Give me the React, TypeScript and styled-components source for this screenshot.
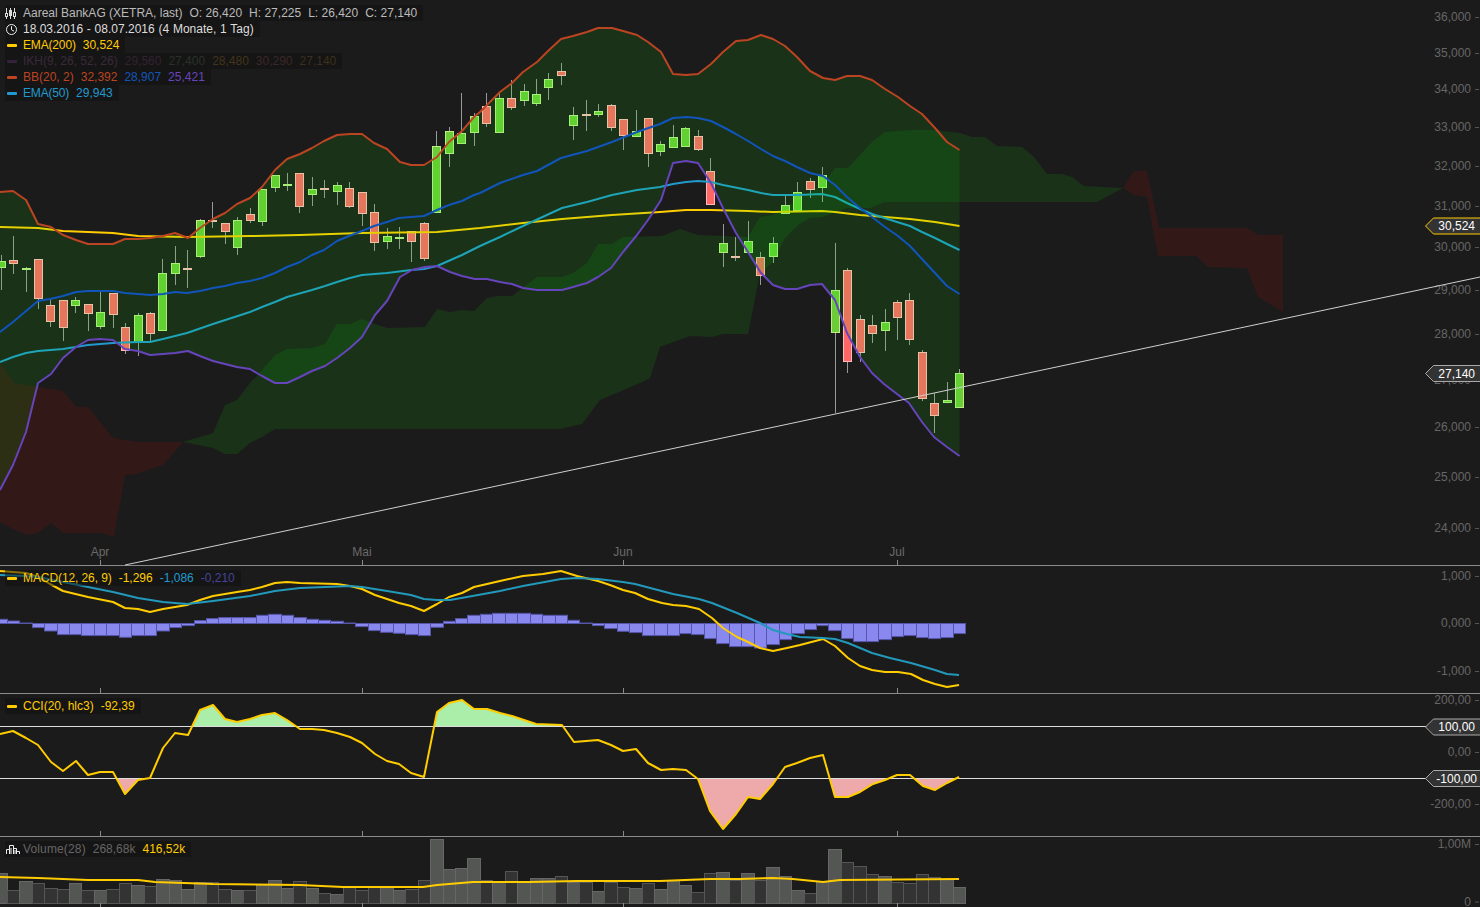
import React from "react";
import styled, { createGlobalStyle } from "styled-components";

const BG = "#1c1b1b";
const FONT = `"Liberation Sans", Arial, sans-serif`;
const STEP = 12.45;
const xAt = (i: number) => 1 + STEP * i;

const GlobalStyle = createGlobalStyle`
  html, body { margin: 0; padding: 0; background: ${BG}; }
  body { font-family: ${FONT}; font-size: 12px; overflow: hidden; }
`;

const Page = styled.main`
  display: flex;
  flex-direction: column;
  width: 1480px;
  height: 907px;
  background: ${BG};
  overflow: hidden;
`;
const Pane = styled.section<{ $height: number; $line?: boolean }>`
  position: relative;
  flex: none;
  box-sizing: border-box;
  height: ${(p) => p.$height}px;
  border-bottom: ${(p) => (p.$line ? "1px solid #8a8a8a" : "none")};
`;
const ChartSvg = styled.svg`
  display: block;
  width: 1480px;
  position: absolute;
  left: 0;
  top: 0;
`;
const Legend = styled.div<{ $top: number }>`
  position: absolute;
  left: 5px;
  top: ${(p) => p.$top}px;
  display: flex;
  flex-direction: column;
  align-items: flex-start;
`;
const LegendRow = styled.div`
  display: flex;
  align-items: center;
  height: 16px;
  padding-right: 6px;
  background: rgba(16, 16, 16, 0.5);
  white-space: nowrap;
  line-height: 16px;
`;
const IconSlot = styled.span`
  display: flex;
  align-items: center;
  width: 18px;
  height: 16px;
  flex: none;
`;
const Dash = styled.span<{ $color: string }>`
  display: block;
  width: 10px;
  height: 3px;
  margin-left: 2px;
  border-radius: 1px;
  background: ${(p) => p.$color};
`;
const LegendText = styled.span<{ $color: string; $gap?: boolean; $track?: number; $words?: number }>`
  color: ${(p) => p.$color};
  margin-left: ${(p) => (p.$gap ? "7px" : "0")};
  letter-spacing: ${(p) => p.$track ?? 0}px;
  word-spacing: ${(p) => p.$words ?? 0}px;
`;
const Wick = styled.line`
  stroke: #999;
  stroke-width: 1;
`;
const Body = styled.rect<{ $up: boolean }>`
  fill: ${(p) => (p.$up ? "#6ccc38" : "#ff6666")};
  stroke: ${(p) => (p.$up ? "#bbee88" : "#ffbbbb")};
  stroke-width: 1;
`;
const Curve = styled.polyline<{ $color: string; $w?: number }>`
  fill: none;
  stroke: ${(p) => p.$color};
  stroke-width: ${(p) => p.$w ?? 2};
  stroke-linejoin: round;
`;
const Area = styled.polygon<{ $color: string }>`
  fill: ${(p) => p.$color};
  stroke: none;
`;
const Rule = styled.line<{ $color?: string }>`
  stroke: ${(p) => p.$color ?? "#dddddd"};
  stroke-width: 1;
`;
const AxisText = styled.text`
  font-family: ${FONT};
  font-size: 12px;
  fill: #666;
  text-anchor: end;
`;
const MonthText = styled.text`
  font-family: ${FONT};
  font-size: 12px;
  fill: #6a6a6a;
  text-anchor: middle;
`;
const TagText = styled.text`
  font-family: ${FONT};
  font-size: 12px;
  fill: #fff;
  text-anchor: end;
`;
const TagShape = styled.polygon<{ $color: string }>`
  fill: #333;
  stroke: ${(p) => p.$color};
  stroke-width: 1;
`;
const HistBar = styled.rect`
  fill: #8888ee;
  stroke: #5555aa;
  stroke-width: 1;
`;
const VolBar = styled.rect<{ $light: boolean }>`
  fill: ${(p) => (p.$light ? "#545654" : "#333333")};
  stroke: ${(p) => (p.$light ? "#666666" : "#555555")};
  stroke-width: 1;
`;

type C = [number, number, number, number, number];
const candles: C[] = [
  [255,290,261,267,1],[236,274,260,263,0],[267,292,268,268,1],[259,309,259,298,0],[299,327,305,321,0],[300,341,300,327,0],
  [297,313,300,305,1],[304,331,304,313,0],[292,329,312,326,1],[293,328,293,314,0],[323,354,327,350,0],[313,356,315,342,1],
  [312,342,313,333,0],[259,331,273,330,1],[246,285,263,273,1],[250,288,268,268,0],[219,258,220,256,1],[202,228,220,221,0],
  [223,244,223,231,0],[217,255,220,247,1],[208,223,214,220,0],[189,226,189,221,1],[175,192,175,187,1],[173,191,184,185,1],
  [173,213,173,206,0],[177,206,189,194,1],[180,198,188,188,0],[182,205,185,191,1],[182,208,188,206,0],[192,226,192,213,0],
  [204,251,212,242,0],[228,249,236,241,1],[227,249,237,237,1],[231,262,231,241,0],[222,261,223,258,0],[131,212,146,212,1],
  [127,167,131,153,1],[93,143,133,143,1],[113,146,116,132,1],[93,127,106,123,0],[92,132,98,132,1],[80,110,98,107,0],
  [84,106,91,100,1],[79,106,94,103,1],[73,100,79,87,1],[63,85,71,75,0],[107,140,115,125,1],[100,131,114,114,0],
  [104,117,111,114,1],[104,131,105,127,0],[119,150,119,135,0],[110,136,131,136,1],[118,167,118,153,0],[141,156,144,151,1],
  [125,147,137,147,1],[127,146,128,146,1],[130,151,136,149,0],[158,204,171,204,0],[224,267,243,252,1],[237,261,256,256,0],
  [221,252,241,252,1],[252,285,257,275,0],[237,263,243,256,1],[195,213,205,213,1],[182,210,192,210,1],[178,198,181,189,0],
  [167,202,175,187,1],[243,413,290,332,1],[268,373,270,361,0],[315,362,319,352,0],[315,343,325,333,0],[309,351,322,330,1],
  [300,340,302,317,0],[293,345,300,339,0],[350,401,352,398,0],[393,433,403,415,0],[382,403,400,402,1],[369,407,373,407,1],
];

const hist = [619.3,621,623,627.6,631,634.6,634.6,635.6,635.6,635.6,637.3,635.6,635.6,631,627.6,625.6,620.6,618.6,617.6,617.6,617.6,615.3,614.3,615.3,617.6,619.3,620.3,621.3,623,626.6,630.6,632.3,633.3,634.6,635.6,627.3,621.3,618.6,615.3,614.3,613.3,613.3,613.3,614.3,615.3,615.3,620.3,623,625.6,628.6,631.3,632.6,635.6,635.6,635.6,633.6,634.6,638.6,643.6,646.6,646.6,648,644.6,639.6,633.6,629.6,625.6,630.6,638.6,641.6,641.6,639.6,636.6,635.6,637.6,638.6,637.6,633.6];

type V = [number, number];
const vols: V[] = [
  [873,1],[890,0],[881,1],[883,0],[888,0],[889,0],[883,1],[890,0],[890,1],[889,0],[883,0],[885,1],[886,0],[879,1],[880,1],[889,1],[882,1],[882,0],[889,0],[890,1],
  [890,0],[885,1],[880,1],[888,1],[881,0],[888,1],[893,0],[894,1],[887,0],[890,0],[887,0],[887,1],[890,1],[889,0],[880,0],[839,1],[869,1],[868,1],[858,1],[880,0],
  [882,1],[871,0],[882,1],[878,1],[878,1],[876,0],[882,1],[882,0],[891,1],[882,0],[887,0],[888,1],[883,0],[889,1],[880,1],[885,1],[892,0],[873,0],[872,1],[880,0],
  [873,1],[880,0],[867,1],[876,1],[890,1],[893,0],[881,1],[849,1],[862,0],[866,0],[874,0],[876,1],[882,0],[883,0],[874,0],[877,0],[879,1],[887,1],
];

const bbUpper = "0,192 13,191 26,200 38,224 51,227 63,235 76,240 88,244 113,244 125,239 138,239 150,238 163,236 175,233 188,238 200,228 213,219 225,213 237,204 250,198 262,187 275,170 287,159 300,154 312,148 324,141 337,135 350,134 362,134 374,143 387,149 400,162 411,165 424,165 437,157 449,142 462,131 474,117 480,112 487,105 500,92 512,83 523,72 537,62 548,51 561,39 573,36 587,32 598,28 612,28 623,31 637,35 648,42 661,52 673,74 686,75 698,74 711,64 723,52 736,41 748,40 761,35 773,39 785,46 797,57 810,71 823,78 835,80 847,76 860,76 872,80 885,89 898,97 910,106 922,114 935,128 947,142 959.5,150";
const bbMid = "0,332 13,322 26,311 38,301 50,299 63,296 76,292 88,291 113,291 125,293 138,294 150,295 163,294 175,292 187,293 200,291 213,288 225,286 237,283 250,281 262,278 275,273 287,267 300,262 312,255 324,250 337,241 349,236 362,231 374,226 387,222 399,218 411,217 424,216 437,210 449,205 462,201 474,195 480,193 500,183 523,175 537,171 561,158 587,151 612,142 637,132 660,124 673,118 686,117 698,118 711,121 723,127 736,134 748,141 761,149 773,156 785,161 797,167 810,173 823,176 835,185 847,197 860,208 872,217 885,227 898,236 910,246 922,259 935,273 947,286 959.5,294";
const bbLower = "0,490 13,465 26,432 38,383 51,374 63,358 76,347 88,340 100,339 113,340 125,349 138,351 150,355 163,354 175,353 188,351 200,356 213,361 225,364 237,367 250,369 262,376 275,383 287,383 300,377 312,371 325,366 337,358 350,348 362,337 375,315 387,301 400,277 412,270 425,267 437,266 450,272 462,276 475,279 487,279 500,282 512,284 523,288 537,290 562,290 573,287 587,283 598,277 611,268 623,252 637,235 648,220 661,200 673,163 686,161 698,163 711,183 723,208 736,233 748,252 761,273 773,285 785,289 797,289 810,285 822,284 835,300 847,333 860,357 872,373 884,384 897,394 909,403 922,422 934,437 947,447 959.5,456";
const ema50 = "0,362 13,357 26,353 38,351 63,349 88,345 113,343 138,342 150,342 163,339 187,333 213,324 250,312 262,307 275,302 287,297 312,290 325,286 337,282 350,278 362,275 387,273 411,270 424,269 437,266 462,255 472,250 480,246 500,237 523,226 562,208 587,202 612,195 637,190 660,187 673,184 686,182 698,181 711,182 723,185 748,190 761,193 773,195 797,195 822,194 835,197 847,203 860,209 872,214 897,222 910,226 922,232 935,238 947,244 959.5,250";
const ema200 = "0,227 38,228 63,231 113,233 138,236 187,237 250,236 300,235 362,233 437,232 480,228 523,223 562,219 612,215 660,212 686,210 711,210 748,211 773,212 822,211 835,212 860,215 885,217 910,219 935,222 959.5,226";

const kumoGreen = "183,442 213,433 225,405 237,400 250,383 262,370 275,355 287,349 312,348 325,344 337,324 350,324 362,319 375,324 387,328 425,327 437,309 450,312 462,310 474,311 480,305 487,298 498,296 512,296 537,277 562,277 573,273 587,263 598,244 612,244 623,237 662,236 680,229 698,235 723,236 748,237 760,217 773,215 798,200 823,184 835,168 848,168 872,142 885,132 910,130 935,130 960,133 972,137 985,137 997,146 1022,147 1034,157 1047,174 1062,174 1072,177 1084,186 1123,188 1110,195 1097,202 885,202 870,208 847,208 835,212 823,217 810,218 798,225 785,238 773,262 760,273 748,334 723,334 712,337 690,336 660,347 650,378 640,383 600,400 582,424 560,429 275,429 262,437 250,443 237,454 225,454 213,448";
const kumoRedLeft = "0,363 14,383 38,387 63,391 76,407 88,407 113,438 138,442 183,442 163,465 147,470 137,474 125,475 114,537 102,533 63,533 51,523 38,533 27,535 13,529 0,522";
const kumoRedRight = "1123,188 1134,171 1147,171 1159,228 1247,228 1258,235 1283,235 1283,312 1258,297 1247,268 1208,267 1196,256 1158,256 1147,197 1134,195";

const macdLine = "0,571 13,572 26,573 38,577 50,584 63,591 88,597 113,602 125,608 138,609 150,612 163,609 175,607 187,605 200,600 213,596 225,594 237,592 250,590 262,587 275,583 287,582 300,583 337,584 350,586 362,589 375,595 387,599 399,603 411,606 424,611 437,604 449,597 462,593 474,587 487,584 500,581 523,576 543,574 561,571 577,576 598,581 610,585 623,590 635,593 648,599 662,603 673,605 686,606 699,609 712,618 723,628 737,637 748,642 760,648 773,651 787,648 800,645 823,639 835,646 848,658 860,666 872,670 885,672 898,672 911,674 923,680 935,684 947,687 959,685";
const macdSignal = "0,575 26,576 38,577 63,582 88,587 113,592 138,598 163,602 175,603 187,604 213,601 250,596 275,591 300,588 325,587 350,586 362,587 387,591 411,595 424,599 437,600 450,600 467,597 500,591 523,586 561,579 577,578 598,579 623,582 635,584 673,594 699,599 712,603 737,613 760,623 773,630 787,634 800,637 823,638 835,639 848,643 872,653 890,658 911,663 935,670 947,674 959,675";

const cci = "0,734 13,731 26,738 38,745 51,762 63,771 76,761 88,775 100,772 113,772 125,794 138,780 150,778 163,748 175,733 188,735 200,710 213,705 225,719 237,722 250,719 262,715 275,713 287,720 300,729 312,729 324,730 337,733 350,737 362,743 375,754 387,761 399,764 411,773 424,777 437,712 449,703 462,700 474,709 487,709 500,713 512,716 536,724 562,725 574,742 598,740 611,745 623,751 636,749 648,763 661,770 673,769 686,770 698,779 710,811 723,829 736,814 748,797 760,799 773,784 785,767 797,763 810,758 823,755 835,797 848,797 860,792 873,784 885,780 897,775 910,775 923,786 935,790 947,783 959,777";
const volAvg = "0,877 38,878 88,880 138,880 155,882 213,884 300,885 343,887 423,887 437,885 473,882 500,882 530,882 577,881 660,881 710,879 740,879 773,878 793,879 823,882 840,880 959,879";

const months = [100, 362, 623, 897];
const mainAxis: [string, number][] = [["36,000",17],["35,000",53],["34,000",89],["33,000",127],["32,000",166],["31,000",206],["30,000",247],["29,000",290],["28,000",334],["27,000",380],["26,000",427],["25,000",477],["24,000",528]];

const barLeft = (i: number) => (i === 0 ? -6.5 : Math.round(xAt(i) - 6.7) + 0.5);

const AxisRow = ({ label, y }: { label: string; y: number }) => (
  <g>
    <AxisText x={1471} y={y + 4}>{label}</AxisText>
    <Rule x1={1475} x2={1479} y1={y + 0.5} y2={y + 0.5} $color="#555" />
  </g>
);
const Tag = ({ label, y, color, textX = 1475 }: { label: string; y: number; color: string; textX?: number }) => (
  <g>
    <TagShape $color={color} points={`1425.5,${y} 1433.5,${y - 8} 1481,${y - 8} 1481,${y + 8} 1433.5,${y + 8}`} />
    <TagText x={textX} y={y + 4}>{label}</TagText>
  </g>
);
const Ticks = ({ y1, y2 }: { y1: number; y2: number }) => (
  <g>
    {months.map((x) => (
      <Rule key={x} x1={x + 0.5} x2={x + 0.5} y1={y1} y2={y2} $color="#8a8a8a" />
    ))}
  </g>
);
const Chart = ({ top, height, children }: { top: number; height: number; children: React.ReactNode }) => (
  <ChartSvg height={height} viewBox={`0 ${top} 1480 ${height}`}>{children}</ChartSvg>
);

const CandleIcon = () => (
  <svg width="13" height="13" viewBox="0 0 13 13">
    <g stroke="#ddd" strokeWidth="1" fill="#ddd">
      <line x1="1.5" y1="1" x2="1.5" y2="12" />
      <line x1="5.5" y1="1" x2="5.5" y2="12" />
      <line x1="9.5" y1="1" x2="9.5" y2="12" />
      <rect x="0.5" y="6.5" width="2" height="3" fill="#1c1b1b" />
      <rect x="4.5" y="3.5" width="2" height="5" />
      <rect x="8.5" y="5.5" width="2" height="4" fill="#1c1b1b" />
    </g>
  </svg>
);
const ClockIcon = () => (
  <svg width="13" height="13" viewBox="0 0 13 13">
    <circle cx="6.5" cy="6.5" r="5" fill="none" stroke="#eee" strokeWidth="1" />
    <path d="M6.5 3.2V6.8L9 8.2" fill="none" stroke="#eee" strokeWidth="1" />
  </svg>
);
const VolumeIcon = () => (
  <svg width="14" height="11" viewBox="0 0 14 11" style={{ marginLeft: 1 }}>
    <path d="M.5 10V5.5H3.5V10M3.5 5.5V1.5H7.5V10M7.5 4.5H10.5V10M10.5 7.5H13.5V10" fill="none" stroke="#eee" strokeWidth="1" />
    <path d="M5 4V10M9 6V10" stroke="#eee" strokeWidth="1" />
  </svg>
);

export default function App() {
  const bbFill = bbUpper + " " + bbLower.split(" ").reverse().join(" ");
  return (
    <Page>
      <GlobalStyle />
      <Pane $height={566} $line>
        <Chart top={0} height={566}>
          {candles.map((c, i) => {
            const x = Math.round(xAt(i) - 0.4);
            return (
              <g key={i}>
                <Wick x1={x + 0.5} x2={x + 0.5} y1={c[0]} y2={c[1]} />
                <Body $up={!!c[4]} x={x - 3.5} y={c[2] + 0.5} width={8} height={Math.max(c[3] - c[2], 1)} />
              </g>
            );
          })}
          <Curve $color="#ffcc00" points={ema200} />
          <Curve $color="#2299cc" points={ema50} />
          <Area $color="rgba(255,0,0,0.1)" points={kumoRedLeft} />
          <Area $color="rgba(255,0,0,0.1)" points={kumoRedRight} />
          <Area $color="rgba(0,255,0,0.1)" points={kumoGreen} />
          <Area $color="rgba(0,255,0,0.1)" points={bbFill} />
          <Curve $color="#bb4422" points={bbUpper} />
          <Curve $color="#1155bb" points={bbMid} />
          <Curve $color="#6644bb" points={bbLower} />
          <Ticks y1={560} y2={565} />
          {months.map((x, i) => (
            <MonthText key={x} x={x} y={556}>{["Apr", "Mai", "Jun", "Jul"][i]}</MonthText>
          ))}
          {mainAxis.map(([l, y]) => (
            <AxisRow key={l} label={l} y={y} />
          ))}
          <Tag label="30,524" y={226} color="#ffcc00" />
          <Tag label="27,140" y={373.5} color="#aaaaaa" />
          <Rule x1={125} y1={565} x2={1480} y2={277} $color="#d0d0d0" />
        </Chart>
        <Legend $top={5}>
          <LegendRow>
            <IconSlot><CandleIcon /></IconSlot>
            <LegendText $color="#bbb">Aareal BankAG (XETRA, last)</LegendText>
            <LegendText $gap $color="#bbb">O: 26,420</LegendText>
            <LegendText $gap $color="#bbb">H: 27,225</LegendText>
            <LegendText $gap $color="#bbb">L: 26,420</LegendText>
            <LegendText $gap $color="#bbb">C: 27,140</LegendText>
          </LegendRow>
          <LegendRow>
            <IconSlot><ClockIcon /></IconSlot>
            <LegendText $color="#ddd" $words={0.45}>18.03.2016 - 08.07.2016 (4 Monate, 1 Tag)</LegendText>
          </LegendRow>
          <LegendRow>
            <IconSlot><Dash $color="#ffcc00" /></IconSlot>
            <LegendText $color="#ffcc00" $track={-0.16}>EMA(200)</LegendText>
            <LegendText $gap $color="#ffcc00">30,524</LegendText>
          </LegendRow>
          <LegendRow>
            <IconSlot><Dash $color="#33223a" /></IconSlot>
            <LegendText $color="#3a2a38">IKH(9, 26, 52, 26)</LegendText>
            <LegendText $gap $color="#33222f">29,560</LegendText>
            <LegendText $gap $color="#2a312a">27,400</LegendText>
            <LegendText $gap $color="#43341a">28,480</LegendText>
            <LegendText $gap $color="#3a2828">30,290</LegendText>
            <LegendText $gap $color="#3d301c">27,140</LegendText>
          </LegendRow>
          <LegendRow>
            <IconSlot><Dash $color="#bb4422" /></IconSlot>
            <LegendText $color="#bb4422">BB(20, 2)</LegendText>
            <LegendText $gap $color="#bb4422">32,392</LegendText>
            <LegendText $gap $color="#1155bb">28,907</LegendText>
            <LegendText $gap $color="#6644bb">25,421</LegendText>
          </LegendRow>
          <LegendRow>
            <IconSlot><Dash $color="#2299cc" /></IconSlot>
            <LegendText $color="#2299cc" $track={-0.18}>EMA(50)</LegendText>
            <LegendText $gap $color="#2299cc">29,943</LegendText>
          </LegendRow>
        </Legend>
      </Pane>

      <Pane $height={128} $line>
        <Chart top={566} height={128}>
          <Rule x1={0} x2={964} y1={623.5} y2={623.5} $color="#5555aa" />
          {hist.map((v, i) => {
            const left = barLeft(i);
            const next = barLeft(i + 1);
            const y0 = Math.min(v, 623.5);
            return <HistBar key={i} x={left} width={next - left} y={y0} height={Math.abs(v - 623.5)} />;
          })}
          <Curve $color="#ffcc00" points={macdLine} />
          <Curve $color="#2299bb" points={macdSignal} />
          <Ticks y1={688} y2={693} />
          <AxisRow label="1,000" y={576} />
          <AxisRow label="0,000" y={623} />
          <AxisRow label="-1,000" y={671} />
        </Chart>
        <Legend $top={4}>
          <LegendRow>
            <IconSlot><Dash $color="#ffcc00" /></IconSlot>
            <LegendText $color="#ffcc00" $track={-0.09}>MACD(12, 26, 9)</LegendText>
            <LegendText $gap $color="#ffcc00">-1,296</LegendText>
            <LegendText $gap $color="#2299cc">-1,086</LegendText>
            <LegendText $gap $color="#444499">-0,210</LegendText>
          </LegendRow>
        </Legend>
      </Pane>

      <Pane $height={143} $line>
        <Chart top={694} height={143}>
          <clipPath id="aboveHigh"><rect x="0" y="694" width="960" height="32.5" /></clipPath>
          <clipPath id="belowLow"><rect x="0" y="778.5" width="960" height="58" /></clipPath>
          <Area $color="#aaeeaa" clipPath="url(#aboveHigh)" points={`0,726.5 ${cci} 959,726.5`} />
          <Area $color="#eeaaaa" clipPath="url(#belowLow)" points={`0,778.5 ${cci} 959,778.5`} />
          <Rule x1={0} x2={1480} y1={726.5} y2={726.5} />
          <Rule x1={0} x2={1480} y1={778.5} y2={778.5} />
          <Curve $color="#ffcc00" points={cci} />
          <Ticks y1={831} y2={836} />
          <AxisRow label="200,00" y={700} />
          <AxisRow label="0,00" y={752} />
          <AxisRow label="-200,00" y={804} />
          <Tag label="100,00" y={727} color="#aaaaaa" />
          <Tag label="-100,00" y={778.5} color="#aaaaaa" textX={1477} />
        </Chart>
        <Legend $top={4}>
          <LegendRow>
            <IconSlot><Dash $color="#ffcc00" /></IconSlot>
            <LegendText $color="#ffcc00">CCI(20, hlc3)</LegendText>
            <LegendText $gap $color="#ffcc00">-92,39</LegendText>
          </LegendRow>
        </Legend>
      </Pane>

      <Pane $height={70}>
        <Chart top={837} height={70}>
          {vols.map((v, i) => {
            const left = barLeft(i);
            return <VolBar key={i} $light={!!v[1]} x={left} width={barLeft(i + 1) - left} y={v[0] + 0.5} height={903.5 - v[0] - 0.5} />;
          })}
          <Curve $color="#ffcc00" points={volAvg} />
          <Ticks y1={903} y2={907} />
          <AxisRow label="1,00M" y={844} />
          <AxisRow label="0" y={901.5} />
        </Chart>
        <Legend $top={4}>
          <LegendRow>
            <IconSlot><VolumeIcon /></IconSlot>
            <LegendText $color="#666" $track={0.14}>Volume(28)</LegendText>
            <LegendText $gap $color="#666">268,68k</LegendText>
            <LegendText $gap $color="#ffcc00">416,52k</LegendText>
          </LegendRow>
        </Legend>
      </Pane>
    </Page>
  );
}
